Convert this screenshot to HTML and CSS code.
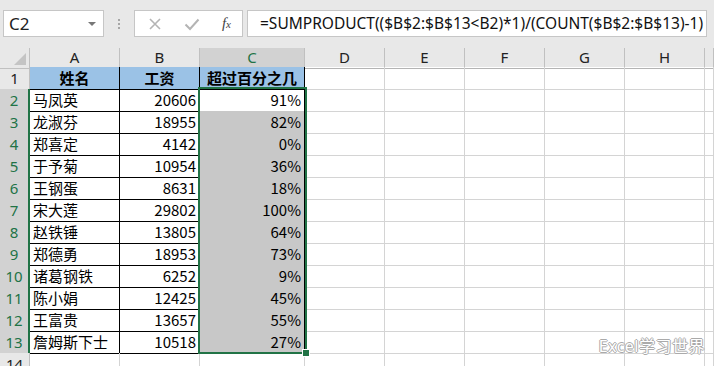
FILE: index.html
```html
<!DOCTYPE html>
<html lang="zh-CN">
  <head>
    <meta charset="UTF-8" />
    <meta name="viewport" content="width=device-width, initial-scale=1.0" />
    <title>超过百分之几</title>
    <link rel="stylesheet" href="styles.css">
  </head>
  <body>
    <div id="app">
      <div class="formula-bar">
        <div class="name-box">
          <span>C2</span>
          <span class="caret"></span>
        </div>
        <div class="grip"><i></i><i></i><i></i></div>
        <div class="fx-buttons">
          <svg width="14" height="14" viewBox="0 0 14 14"><path d="M2 2 L12 12 M12 2 L2 12" stroke="#b4b4b4" stroke-width="1.6" fill="none" /></svg>
          <svg width="16" height="14" viewBox="0 0 16 14"><path d="M1.5 7.5 L6 12 L14.5 2.5" stroke="#b4b4b4" stroke-width="2" fill="none" /></svg>
          <span class="fx"><i>f</i><span>x</span></span>
        </div>
        <div class="formula">=SUMPRODUCT(($B$2:$B$13&lt;B2)*1)/(COUNT($B$2:$B$13)-1)</div>
      </div>

      <div class="sheet" id="sheet">
        <div class="row head-row">
          <div class="corner"><span class="corner-mark"></span></div>
          <div class="col-head">A</div>
          <div class="col-head">B</div>
          <div class="col-head active">C</div>
          <div class="col-head">D</div>
          <div class="col-head">E</div>
          <div class="col-head">F</div>
          <div class="col-head">G</div>
          <div class="col-head">H</div>
          <div class="col-head"></div>
        </div>
        <div class="selection"><span class="handle"></span></div>
      </div>

      <div class="watermark">Excel学习世界</div>
    </div>

    <script>
      let rows = [
        ["马凤英", 20606, "91%"],
        ["龙淑芬", 18955, "82%"],
        ["郑喜定", 4142, "0%"],
        ["于予菊", 10954, "36%"],
        ["王钢蛋", 8631, "18%"],
        ["宋大莲", 29802, "100%"],
        ["赵铁锤", 13805, "64%"],
        ["郑德勇", 18953, "73%"],
        ["诸葛钢铁", 6252, "9%"],
        ["陈小娟", 12425, "45%"],
        ["王富贵", 13657, "55%"],
        ["詹姆斯下士", 10518, "27%"]
      ];

      let sheetEl = document.querySelector("#sheet");
      let selectionEl = document.querySelector(".selection");

      function addRow(num, cells, cls) {
        let row = document.createElement("div");
        row.className = "row " + cls;
        let html = '<div class="row-head">' + num + "</div>";
        for (let i = 0; i < 9; i++) {
          let c = cells[i];
          if (c) {
            html += '<div class="cell ' + c.cls + '">' + c.text + "</div>";
          } else {
            html += '<div class="cell"></div>';
          }
        }
        row.innerHTML = html;
        sheetEl.insertBefore(row, selectionEl);
      }

      addRow(1, [
        { cls: "t th center", text: "姓名" },
        { cls: "t th center", text: "工资" },
        { cls: "t th center", text: "超过百分之几" }
      ], "");

      rows.forEach((r, i) => {
        addRow(i + 2, [
          { cls: "t", text: r[0] },
          { cls: "t num", text: r[1] },
          { cls: "t num" + (i > 0 ? " shade" : ""), text: r[2] }
        ], "picked");
      });

      addRow(14, [], "");
    </script>
  </body>
</html>
```

FILE: styles.css
```css
body {
  margin: 0;
  background-color: #e8e8e8;
  font-family: "Noto Sans", "Noto Sans CJK SC", sans-serif;
  color: #000;
  overflow: hidden;
}

#app {
  position: relative;
  width: 714px;
  height: 366px;
  overflow: hidden;
}

/* formula bar */

.formula-bar {
  display: flex;
  align-items: center;
  height: 48px;
  padding: 0 7px 1px 3px;
  box-sizing: border-box;
}

.name-box,
.fx-buttons,
.formula {
  height: 27px;
  background-color: #fff;
  border: 1px solid #c6c6c6;
  box-sizing: border-box;
}

.name-box {
  width: 101px;
  display: flex;
  align-items: center;
  justify-content: space-between;
  padding: 0 7px 0 5px;
  font-size: 17px;
  color: #222;
}

.caret {
  width: 0;
  height: 0;
  border-left: 4px solid transparent;
  border-right: 4px solid transparent;
  border-top: 4px solid #777;
}

.grip {
  width: 30px;
  display: flex;
  flex-direction: column;
  align-items: center;
  gap: 2px;
}

.grip i {
  width: 2px;
  height: 2px;
  background-color: #a6a6a6;
}

.fx-buttons {
  width: 109px;
  display: flex;
  align-items: center;
  justify-content: space-between;
  padding: 0 11px 0 13px;
}

.fx {
  font-family: "Liberation Serif", serif;
  font-size: 15px;
  color: #444;
}

.fx span {
  font-style: italic;
  font-size: 11px;
}

.formula {
  flex: 1;
  margin-left: 4px;
  padding-left: 12px;
  font-size: 15.5px;
  line-height: 25px;
  color: #111;
  white-space: nowrap;
}

/* sheet */

.sheet {
  position: relative;
  background-color: #fff;
}

.row {
  display: grid;
  grid-template-columns: 30px 90px 80px 105px 80px 80px 80px 80px 80px 1fr;
  height: 22px;
}

.head-row {
  height: 19px;
  background-color: #e8e8e8;
}

.corner {
  position: relative;
  border-right: 1px solid #c0c0c0;
  border-bottom: 1px solid #c0c0c0;
}

.corner-mark {
  position: absolute;
  right: 3px;
  bottom: 3px;
  width: 0;
  height: 0;
  border-left: 12px solid transparent;
  border-bottom: 12px solid #c4c4c4;
}

.col-head {
  border-right: 1px solid #c0c0c0;
  border-bottom: 1px solid #b4b4b4;
  font-size: 15px;
  line-height: 19px;
  text-align: center;
  color: #222;
}

.col-head.active {
  background-color: #d2d2d2;
  color: #217346;
  border-bottom: 2px solid #217346;
}

.row-head {
  background-color: #e8e8e8;
  border-right: 1px solid #c0c0c0;
  border-bottom: 1px solid #c0c0c0;
  font-size: 15px;
  line-height: 22px;
  text-align: center;
  color: #222;
}

.picked .row-head {
  background-color: #d2d2d2;
  color: #217346;
  border-right: 2px solid #217346;
}

.cell {
  border-right: 1px solid #d4d4d4;
  border-bottom: 1px solid #d4d4d4;
  font-family: "Noto Sans CJK SC", sans-serif;
  font-size: 15px;
  line-height: 21px;
  padding: 0 3px;
  white-space: nowrap;
  overflow: hidden;
}

.cell.t {
  border-right-color: #000;
  border-bottom-color: #000;
}

.th {
  background-color: #9bc2e6;
  font-weight: bold;
}

.center {
  text-align: center;
}

.num {
  text-align: right;
}

.shade {
  background-color: #c8c8c8;
}

.selection {
  position: absolute;
  left: 198px;
  top: 39px;
  width: 109px;
  height: 267px;
  border: 2px solid #217346;
  box-sizing: border-box;
}

.handle {
  position: absolute;
  right: -5px;
  bottom: -5px;
  width: 6px;
  height: 6px;
  background-color: #217346;
  border: 1px solid #fff;
}

.watermark {
  position: absolute;
  right: 9px;
  bottom: 9px;
  font-size: 16px;
  color: #fff;
  letter-spacing: 0.5px;
  text-shadow: 1px 0 #aaa, -1px 0 #aaa, 0 1px #aaa, 0 -1px #aaa;
}
```
